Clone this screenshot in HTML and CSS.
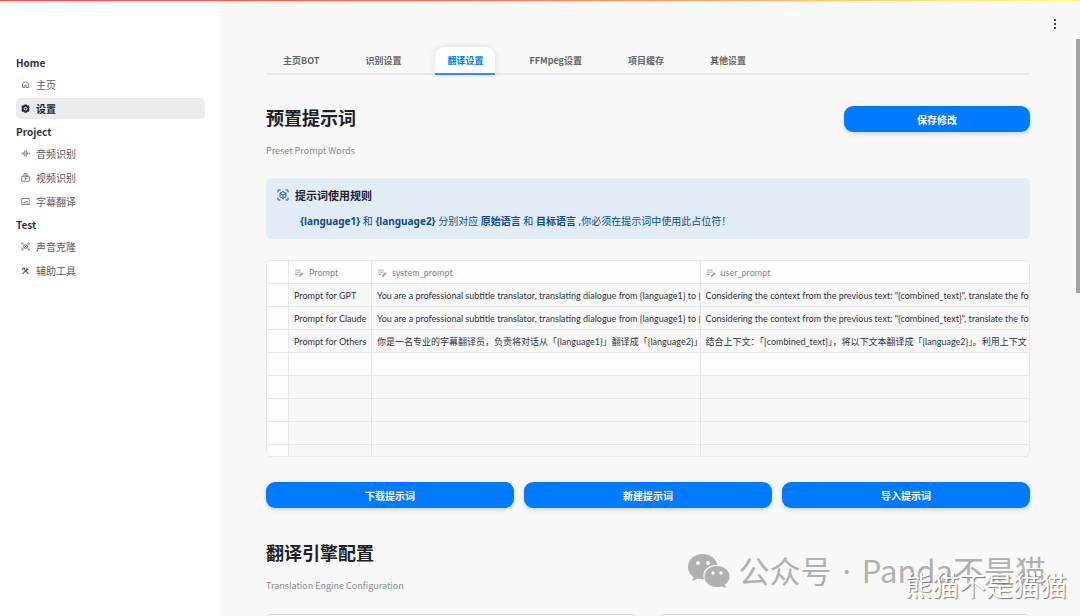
FILE: index.html
```html
<!DOCTYPE html>
<html lang="zh-CN">
<head>
    <meta charset="UTF-8">
    <meta name="viewport" content="width=device-width, initial-scale=1.0">
    <title>设置</title>
    <link rel="stylesheet" href="styles.css">
</head>
<body>
    <svg class="symbols" aria-hidden="true">
        <symbol id="edit-note" viewBox="0 0 24 24">
            <path d="M2 4h14v2H2zM2 9h14v2H2zM2 14h8v2H2z" fill="currentColor"/>
            <path d="M12 21v-3l8-8 3 3-8 8z" fill="currentColor"/>
        </symbol>
        <symbol id="scan-cube" viewBox="0 0 24 24">
            <path d="M2 7V2h5M17 2h5v5M22 17v5h-5M7 22H2v-5M12 5l6 3.500v7L12 19l-6-3.500v-7zM6 8.500l6 3.500 6-3.500M12 12v7" fill="none" stroke="currentColor" stroke-width="2"/>
        </symbol>
    </svg>

    <div class="top-line"></div>

    <div class="app">
        <nav class="sidebar">
            <h2>Home</h2>
            <a href="#">
                <svg viewBox="0 0 24 24"><path d="M4 20V10l8-6 8 6v10h-6v-6h-4v6z" fill="none" stroke="currentColor" stroke-width="2"/></svg>
                主页
            </a>
            <a href="#" class="active">
                <svg viewBox="0 0 24 24"><path d="M9 1h6l1 3 4-1 3 5-2 4 2 4-3 5-4-1-1 3H9l-1-3-4 1-3-5 2-4-2-4 3-5 4 1z" fill="currentColor"/><circle cx="12" cy="12" r="5" fill="#ebebeb"/><circle cx="12" cy="12" r="3" fill="currentColor"/></svg>
                设置
            </a>
            <h2>Project</h2>
            <a href="#">
                <svg viewBox="0 0 24 24"><path d="M2 10v4M6 8v8M10 4v16M14 3v18M18 8v8M22 10v4" stroke="currentColor" stroke-width="2"/></svg>
                音频识别
            </a>
            <a href="#">
                <svg viewBox="0 0 24 24"><path d="M2 9h20v13H2zM4 5.500h16M7 2h10" fill="none" stroke="currentColor" stroke-width="2"/><path d="M10 11v8l6-4z" fill="currentColor"/></svg>
                视频识别
            </a>
            <a href="#">
                <svg viewBox="0 0 24 24"><path d="M2 4h20v16H2zM6 15h5l2-3h5M14 16h4" fill="none" stroke="currentColor" stroke-width="2"/></svg>
                字幕翻译
            </a>
            <h2>Test</h2>
            <a href="#">
                <svg viewBox="0 0 24 24"><path d="M2 7V3h5M17 3h5v4M22 17v4h-5M7 21H2v-4M5 6l3 3M19 6l-3 3M5 18l3-3M19 18l-3-3" fill="none" stroke="currentColor" stroke-width="2"/><circle cx="12" cy="12" r="5" fill="none" stroke="currentColor" stroke-width="2"/><circle cx="12" cy="12" r="2" fill="currentColor"/></svg>
                声音克隆
            </a>
            <a href="#">
                <svg viewBox="0 0 24 24"><path d="M4 21L18 7M10 10l10 11" stroke="currentColor" stroke-width="3"/><path d="M2 8l6-5 4 3-3 5-2-3-3 3zM16 3v5h5l-3 3-4-2 1-5z" fill="currentColor"/></svg>
                辅助工具
            </a>
        </nav>

        <main class="content">
            <div class="tabs" role="tablist">
                <button role="tab">主页BOT</button>
                <button role="tab">识别设置</button>
                <button role="tab" class="active" aria-selected="true">翻译设置</button>
                <button role="tab">FFMpeg设置</button>
                <button role="tab">项目缓存</button>
                <button role="tab">其他设置</button>
            </div>

            <div class="title-row">
                <h1>预置提示词</h1>
                <button class="btn">保存修改</button>
            </div>
            <p class="caption">Preset Prompt Words</p>

            <section class="callout">
                <h3><svg><use href="#scan-cube"/></svg>提示词使用规则</h3>
                <p><b>{language1}</b> 和 <b>{language2}</b> 分别对应 <b>原始语言</b> 和 <b>目标语言</b> ,你必须在提示词中使用此占位符！</p>
            </section>

            <div class="table-wrap">
                <table>
                    <colgroup>
                        <col class="col-check">
                        <col class="col-name">
                        <col>
                        <col>
                    </colgroup>
                    <thead>
                        <tr>
                            <th></th>
                            <th><svg><use href="#edit-note"/></svg>Prompt</th>
                            <th><svg><use href="#edit-note"/></svg>system_prompt</th>
                            <th><svg><use href="#edit-note"/></svg>user_prompt</th>
                        </tr>
                    </thead>
                    <tbody>
                        <tr>
                            <td></td>
                            <td>Prompt for GPT</td>
                            <td>You are a professional subtitle translator, translating dialogue from {language1} to {language2}</td>
                            <td>Considering the context from the previous text: "{combined_text}", translate the following text</td>
                        </tr>
                        <tr>
                            <td></td>
                            <td>Prompt for Claude</td>
                            <td>You are a professional subtitle translator, translating dialogue from {language1} to {language2}</td>
                            <td>Considering the context from the previous text: "{combined_text}", translate the following text</td>
                        </tr>
                        <tr>
                            <td></td>
                            <td>Prompt for Others</td>
                            <td>你是一名专业的字幕翻译员，负责将对话从「{language1}」翻译成「{language2}」</td>
                            <td>结合上下文：「{combined_text}」，将以下文本翻译成「{language2}」。利用上下文</td>
                        </tr>
                        <tr class="add-row"><td></td><td></td><td></td><td></td></tr>
                        <tr><td></td><td></td><td></td><td></td></tr>
                        <tr><td></td><td></td><td></td><td></td></tr>
                        <tr><td></td><td></td><td></td><td></td></tr>
                        <tr class="last-row"><td></td><td></td><td></td><td></td></tr>
                    </tbody>
                </table>
            </div>

            <div class="actions">
                <button class="btn">下载提示词</button>
                <button class="btn">新建提示词</button>
                <button class="btn">导入提示词</button>
            </div>

            <h1>翻译引擎配置</h1>
            <p class="caption">Translation Engine Configuration</p>

            <div class="cards">
                <div class="card"></div>
                <div class="card"></div>
            </div>
        </main>
    </div>

    <button class="menu" aria-label="Menu">
        <svg viewBox="0 0 10 10"><circle cx="5" cy="1" r="1"/><circle cx="5" cy="5" r="1"/><circle cx="5" cy="9" r="1"/></svg>
    </button>
    <div class="scroll-thumb"></div>

    <div class="account">
        <svg viewBox="0 0 42 34">
            <path d="M15 0C6.500 0 0 5.500 0 13c0 4 2 7.500 5.500 10L4.500 27l5-2.500c2 .6 4 .9 6.500.8C13 17 20 10.500 29.500 10.800 28 4.500 22 0 15 0z"/>
            <path d="M29 12c-7 0-12.500 4.600-12.500 10.500S22 33 29 33c1.600 0 3-.2 4.300-.6L38 34l-1.200-3.500C40 28.500 41.500 25.700 41.500 22.500 41.500 16.600 36 12 29 12z"/>
            <g fill="#f8f8f8"><circle cx="10" cy="9" r="2"/><circle cx="20" cy="9" r="2"/><circle cx="25" cy="19" r="1.700"/><circle cx="33" cy="19" r="1.700"/></g>
        </svg>
        <span>公众号<span class="dot"> · </span>Panda不是猫</span>
    </div>
    <div class="signature">熊猫不是猫猫</div>
</body>
</html>
```

FILE: styles.css
```css
* {
    box-sizing: border-box;
}

body {
    margin: 0;
    height: 100vh;
    overflow: hidden;
    position: relative;
    font-family: "Noto Sans CJK SC", sans-serif;
    font-size: 10px;
    color: #31333f;
    background: #f8f8f8;
}

h1, h2, h3, p {
    margin: 0;
}

button {
    font-family: inherit;
    border: none;
    cursor: pointer;
}

.symbols {
    display: none;
}

.top-line {
    position: absolute;
    top: 0;
    left: 0;
    right: 0;
    height: 1px;
    background: linear-gradient(90deg, #ff4b4b, #ff6a5a 40%, #ffc470 75%, #fffd80);
}

.app {
    display: flex;
    height: 100%;
}

/* Sidebar */
.sidebar {
    flex: 0 0 220px;
    padding: 53px 15px 0 16px;
    background: #fff;
}

.sidebar h2 {
    padding-bottom: 2px;
    font-size: 10px;
    line-height: 19px;
    font-weight: bold;
}

.sidebar a {
    display: flex;
    align-items: center;
    gap: 6px;
    height: 21px;
    margin-bottom: 3px;
    padding-left: 5px;
    border-radius: 5px;
    color: #5a5c65;
    text-decoration: none;
}

.sidebar a.active {
    background: #ebebeb;
    color: #22242e;
    font-weight: bold;
}

.sidebar svg {
    width: 9px;
    height: 9px;
}

/* Main column */
.content {
    flex: 1;
    min-width: 0;
    padding: 47px 50px 0 46px;
    overflow: hidden;
}

.tabs {
    display: flex;
    gap: 22px;
    padding-left: 5px;
    border-bottom: 2px solid #e8e8e8;
}

.tabs button {
    height: 28px;
    margin-bottom: -2px;
    padding: 0 12px;
    font-size: 9px;
    font-weight: bold;
    color: #666;
    background: none;
    border-bottom: 2px solid transparent;
}

.tabs .active {
    color: #007bff;
    background: #fff;
    border-bottom-color: #2b8cff;
    border-radius: 9px 9px 0 0;
    box-shadow: 0 -1px 6px rgba(0, 0, 0, 0.1);
}

h1 {
    padding-bottom: 4px;
    font-size: 18px;
    line-height: 22px;
    color: #1f2027;
}

.title-row {
    display: flex;
    justify-content: space-between;
    align-items: center;
    margin-top: 31px;
}

.title-row .btn {
    width: 186px;
}

.btn {
    height: 26px;
    border-radius: 9px;
    font-size: 10px;
    font-weight: bold;
    color: #fff;
    background: #007bff;
    box-shadow: 0 2px 4px rgba(0, 0, 0, 0.15);
}

.caption {
    margin-top: 11px;
    font-size: 9px;
    line-height: 16px;
    color: #8b8c92;
}

.callout {
    margin-top: 19px;
    padding: 8px 11px 9px;
    border-radius: 5px;
    color: #0f4c8a;
    background: #e1ecf7;
}

.callout h3 {
    display: flex;
    align-items: center;
    gap: 6px;
    font-size: 11px;
    line-height: 18px;
    color: #1f2027;
}

.callout svg {
    width: 12px;
    height: 12px;
    color: #1c5a9c;
}

.callout p {
    margin-top: 8px;
    padding-left: 23px;
    font-family: "Noto Sans", "Noto Sans CJK SC", sans-serif;
    line-height: 18px;
}

/* Prompt table */
.table-wrap {
    margin-top: 21px;
    border: 1px solid #e8eaea;
    border-radius: 5px;
    overflow: hidden;
}

table {
    width: 100%;
    table-layout: fixed;
    border-collapse: separate;
    border-spacing: 0;
    font-family: Lato, "Noto Sans CJK SC", sans-serif;
    font-size: 9px;
}

.col-check {
    width: 22px;
}

.col-name {
    width: 83px;
}

th, td {
    height: 23px;
    padding: 2px 0 0 5px;
    line-height: 16px;
    text-align: left;
    white-space: nowrap;
    overflow: hidden;
    border-right: 1px solid #e6e8e8;
    border-bottom: 1px solid #e6e8e8;
}

th:last-child, td:last-child {
    border-right: none;
}

th {
    font-weight: normal;
    color: #85868c;
    background: #fcfdfd;
}

th svg {
    width: 10px;
    height: 10px;
    margin-right: 5px;
    vertical-align: -2px;
    color: #999;
}

td:first-child, .add-row td {
    background: #fcfdfd;
}

.last-row td {
    height: 11px;
    border-bottom: none;
}

.actions {
    display: grid;
    grid-template-columns: repeat(3, 1fr);
    gap: 10px;
    margin: 25px 0 33px;
}

.cards {
    display: grid;
    grid-template-columns: 1fr 1fr;
    gap: 22px;
    margin-top: 20px;
}

.card {
    height: 100px;
    border: 1px solid #d8d9dc;
    border-radius: 5px;
}

/* Floating bits */
.menu {
    position: absolute;
    top: 18px;
    right: 20px;
    width: 10px;
    height: 11px;
    padding: 0;
    background: none;
}

.menu svg {
    display: block;
    width: 10px;
    height: 10px;
}

.scroll-thumb {
    position: absolute;
    top: 39px;
    right: 0;
    width: 4px;
    height: 254px;
    background: #a3a3a3;
}

.account {
    position: absolute;
    right: 34px;
    bottom: 23px;
    display: flex;
    align-items: center;
    gap: 8px;
    font-size: 31px;
    line-height: 44px;
    color: #b0b0b0;
}

.account svg {
    width: 42px;
    height: 34px;
    fill: #b0b0b0;
}

.dot {
    padding: 0 3px;
    font-family: "Noto Sans", sans-serif;
}

.signature {
    position: absolute;
    right: 13px;
    bottom: 11px;
    font-size: 27px;
    line-height: 40px;
    color: #fff;
    text-shadow: 1px 1px 1px #777;
}
```
